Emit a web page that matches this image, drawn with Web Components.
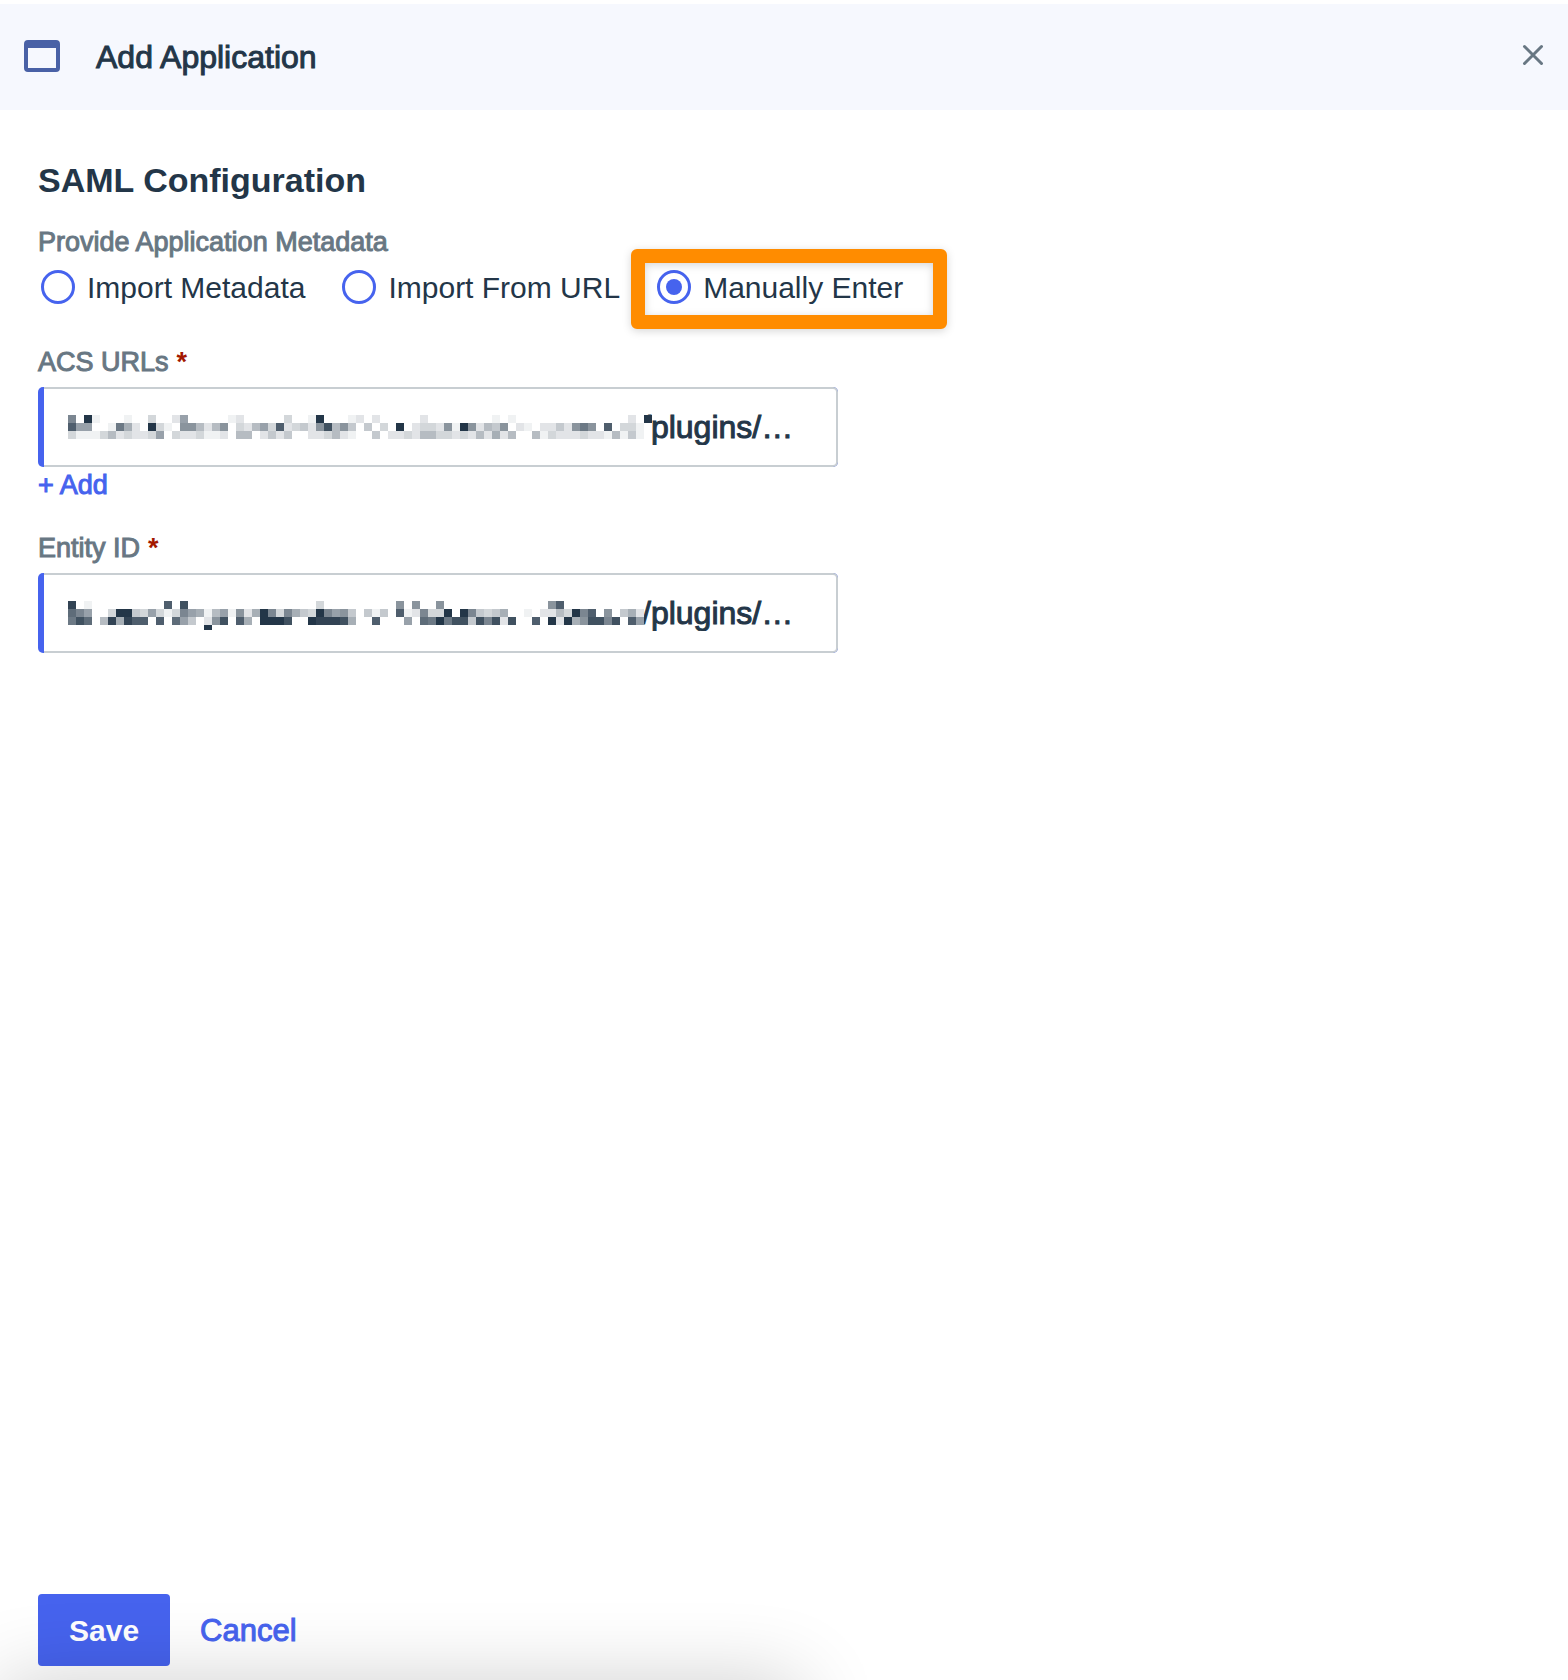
<!DOCTYPE html>
<html lang="en">
<head>
<meta charset="utf-8">
<title>Add Application</title>
<style>
  html, body { margin: 0; height: 100%; }
  body {
    --ink: #233648; --muted: #687783; --brand: #4663ee; --line: #c8ced2;
    font-family: "Liberation Sans", Arial, sans-serif;
    color: var(--ink); background: #fff;
  }
</style>
</head>
<body>
<app-panel>
  <panel-header slot="header">Add Application</panel-header>
  <saml-form></saml-form>
  <panel-footer slot="footer"></panel-footer>
</app-panel>
<script>
const base = `<style>
  *, *::before { box-sizing: border-box; }
  button, input { font-family: inherit; color: inherit; margin: 0; padding: 0; border: 0; background: none; }
  button { cursor: pointer; }
  .medium { font-weight: 400; -webkit-text-stroke: 1px currentColor; }
</style>`;
function define(name, html, setup) {
  customElements.define(name, class extends HTMLElement {
    connectedCallback() {
      if (this.shadowRoot) return;
      const root = this.attachShadow({ mode: "open" });
      root.innerHTML = base + html;
      if (setup) setup(this, root);
    }
  });
}

define("app-panel", `
<style>
  :host { display: flex; flex-direction: column; min-height: 100vh; padding-top: 4px; position: relative; overflow: hidden; box-sizing: border-box; }
  main { flex: 1; }
  .shade { position: absolute; left: 0; top: 100%; width: 51%; height: 200px; box-shadow: 0 0 80px rgba(0,0,0,.19); pointer-events: none; }
</style>
<slot name="header"></slot>
<main><slot></slot></main>
<slot name="footer"></slot>
<div class="shade"></div>`);

define("panel-header", `
<style>
  :host { display: block; background: #f6f8fe; }
  header { display: flex; align-items: center; gap: 36px; height: 106px; padding: 0 24px 2px; }
  h1 { margin: 0; flex: 1; font-size: 32px; line-height: 36px; padding-top: 2px; }
  svg { display: block; }
  button { padding-bottom: 2px; }
</style>
<header>
  <svg width="36" height="32" viewBox="0 0 36 32" aria-hidden="true"><path fill="#4961a6" fill-rule="evenodd" d="M4 0h28a4 4 0 0 1 4 4v24a4 4 0 0 1-4 4H4a4 4 0 0 1-4-4V4a4 4 0 0 1 4-4zM4 8v20h28V8z"/></svg>
  <h1 class="medium"><slot></slot></h1>
  <button type="button" aria-label="Close">
    <svg width="22" height="22" viewBox="0 0 22 22" fill="none" stroke="#687783" stroke-width="3" stroke-linecap="round"><path d="M2.500 2.500l17 17M19.500 2.500l-17 17"/></svg>
  </button>
</header>`);

define("metadata-choice", `
<style>
  :host { display: block; }
  fieldset { margin: 0; padding: 0; border: 0; min-width: 0; }
  legend { padding: 0; font-size: 27px; line-height: 32px; color: var(--muted); }
  .row { display: flex; gap: 37px; padding: 12px 3px 0; }
  label { display: flex; align-items: flex-start; gap: 12px; font-size: 30px; line-height: 36px; white-space: nowrap; position: relative; }
  input { appearance: none; width: 34px; height: 34px; border: 3px solid var(--brand); border-radius: 50%; display: grid; place-items: center; background: #fff; }
  input:checked::before { content: ""; width: 16px; height: 16px; border-radius: 50%; background: var(--brand); }
  .marker { position: absolute; inset: -21px -44px -23px -26px; border: 14px solid #ff8c00; border-radius: 6px; filter: drop-shadow(0 2px 4px rgba(0,0,0,.16)); pointer-events: none; }
</style>
<fieldset>
  <legend class="medium">Provide Application Metadata</legend>
  <div class="row">
    <label><input type="radio" name="source">Import Metadata</label>
    <label><input type="radio" name="source">Import From URL</label>
    <label><input type="radio" name="source" checked>Manually Enter<span class="marker"></span></label>
  </div>
</fieldset>`);

// Pixelated mask over a private host name; each hex digit is the darkness of one cell.
const masks = {
  acs: ["90f10 00100 30027 00000 12000 00300 1f000 12020 00002 00000 00010 10000 00000 00000 20f",
        "c7700 1a620 f3108 85258 03257 3c234 28d58 40403 0f023 3281f 82548 02102 2428a 80c03 310",
        "31113 52322 37032 23112 05502 42400 22352 10040 22325 53323 25262 50051 32223 22151 410"],
  entity: ["e0100 00000 00c0d 00000 00000 00000 03000 00000 08080 08000 00000 00000 8c000 00000 000",
        "b9700 3ff43 73139 76157 1826f 93964 3f978 40414 0c129 33f0f 94346 00102 253f9 c0804 620",
        "adb05 e6ecc 0c0b7 4028d 0c60f ffd00 feeed 600c0 0070b afadd 4d9d2 d00c0 f2f68 dd9d0 c70",
        "00000 00000 00000 00f"]
};
define("pixel-mask", `
<style>
  :host { display: block; flex: none; position: relative; }
  :host([kind="acs"]) { background: #fff; }
  svg { display: block; overflow: visible; }
</style>
<svg width="584" height="24" shape-rendering="crispEdges" aria-hidden="true"></svg>`, (el, root) => {
  const mix = (d, c) => Math.round(255 - (255 - c) * d / 15);
  root.querySelector("svg").innerHTML = masks[el.getAttribute("kind")].map((row, y) =>
    [...row.replace(/ /g, "")].map((h, x) => {
      const d = parseInt(h, 16);
      return d ? `<rect x="${x * 8}" y="${y * 8}" width="8" height="${y === 3 ? 5 : 8}" fill="rgb(${mix(d,35)},${mix(d,54)},${mix(d,72)})"/>` : "";
    }).join("")).join("");
});

define("masked-field", `
<style>
  :host { display: block; }
  label { display: flex; gap: 8px; font-size: 27px; line-height: 32px; color: var(--muted); margin-bottom: 9px; }
  .star { color: #a31800; font-weight: 700; }
  .frame { width: 100%; max-width: 800px; padding-left: 6px; border-radius: 5px; background: var(--brand); }
  .box { display: flex; align-items: center; height: 80px; padding-left: 24px; background: #fff; border: 2px solid var(--line); border-left: 0; border-radius: 0 5px 5px 0; }
  input { flex: 1; min-width: 0; margin-left: -10px; font-size: 32px; line-height: 36px; height: 36px; outline: 0; }
</style>
<label for="value"><span class="medium name"></span><span class="star">*</span></label>
<div class="frame"><div class="box"><input class="medium" id="value" type="text" value="/plugins/…"></div></div>`, (el, root) => {
  root.querySelector(".name").textContent = el.getAttribute("label");
  const mask = document.createElement("pixel-mask");
  mask.setAttribute("kind", el.getAttribute("kind"));
  root.querySelector(".box").prepend(mask);
});

define("saml-form", `
<style>
  :host { display: block; padding: 50px 38px; }
  h2 { margin: 0 0 26px; font-size: 34px; line-height: 40px; font-weight: 700; }
  metadata-choice { margin-bottom: 40px; }
  button { display: block; margin: 2px 0 31px; font-size: 27px; line-height: 32px; color: var(--brand); }
</style>
<h2>SAML Configuration</h2>
<metadata-choice></metadata-choice>
<masked-field label="ACS URLs" kind="acs"></masked-field>
<button type="button" class="medium">+ Add</button>
<masked-field label="Entity ID" kind="entity"></masked-field>`);

define("panel-footer", `
<style>
  :host { display: block; padding: 0 38px 14px; }
  footer { display: flex; gap: 30px; }
  button { height: 72px; line-height: 36px; padding-top: 2px; }
  .save { padding: 2px 31px 0; font-size: 30px; font-weight: 700; color: #fff; background: var(--brand); border-radius: 4px; }
  .cancel { font-size: 31px; color: var(--brand); }
</style>
<footer>
  <button type="button" class="save">Save</button>
  <button type="button" class="cancel medium">Cancel</button>
</footer>`);
</script>
</body>
</html>
